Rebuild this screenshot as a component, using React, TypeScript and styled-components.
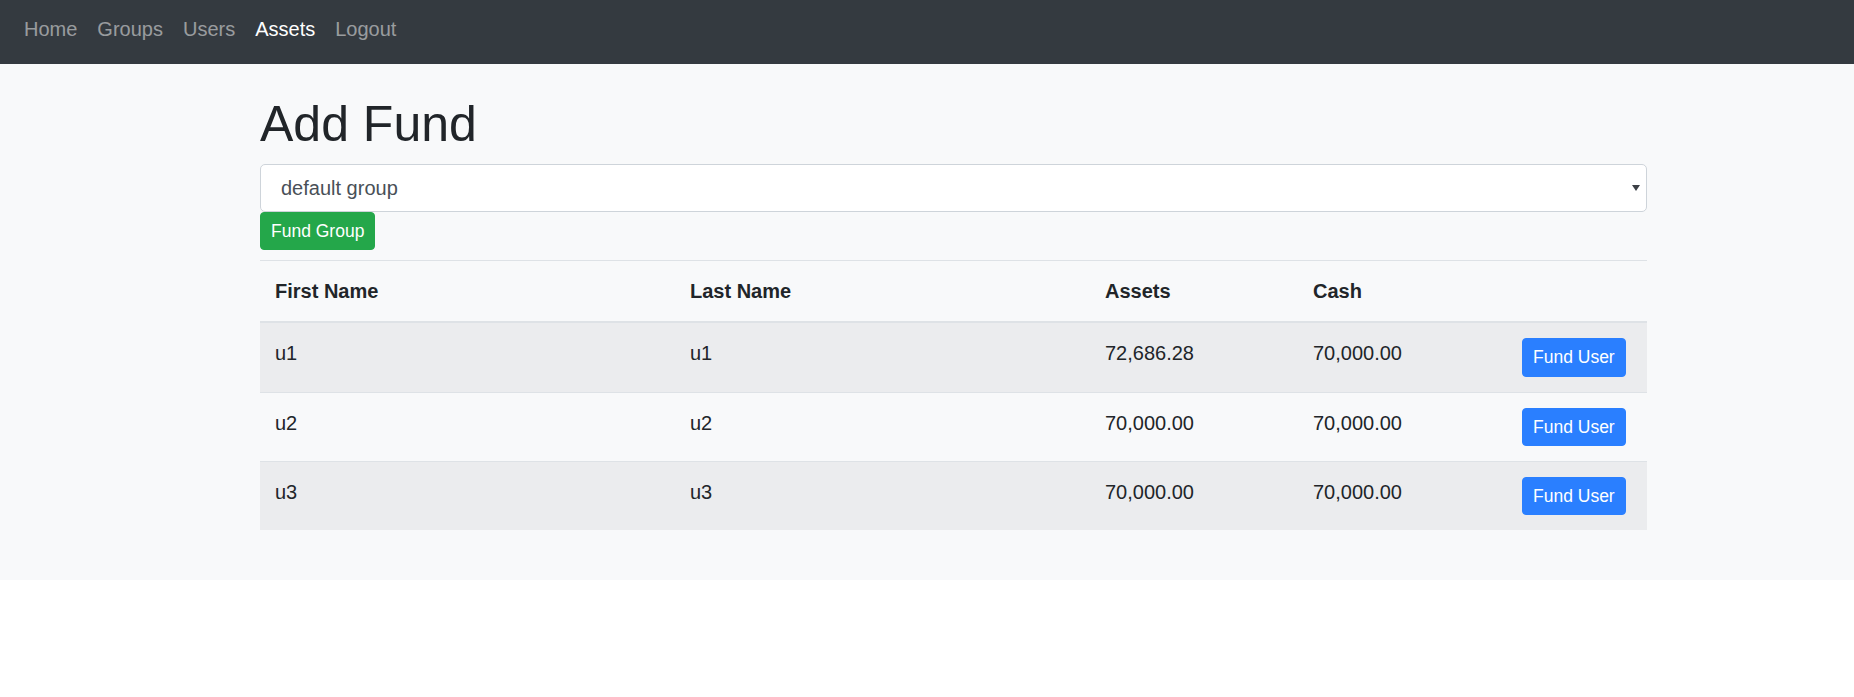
import React from 'react';
import styled, {createGlobalStyle} from "styled-components";

type UserRowType = {
    id: number
    firstName: string
    lastName: string
    assets: string
    cash: string
}

const users: UserRowType[] = [
    {id: 1, firstName: 'u1', lastName: 'u1', assets: '72,686.28', cash: '70,000.00'},
    {id: 2, firstName: 'u2', lastName: 'u2', assets: '70,000.00', cash: '70,000.00'},
    {id: 3, firstName: 'u3', lastName: 'u3', assets: '70,000.00', cash: '70,000.00'},
]

const navItems = ['Home', 'Groups', 'Users', 'Assets', 'Logout']

const App = () => {
    return (
        <>
            <GlobalStyle/>
            <NavBar>
                {navItems.map(item => (
                    <NavLink key={item} href="#" active={item === 'Assets'}>{item}</NavLink>
                ))}
            </NavBar>
            <Main>
                <Container>
                    <Title>Add Fund</Title>
                    <SelectWrap>
                        <Select defaultValue="default">
                            <option value="default">default group</option>
                        </Select>
                        <Arrow/>
                    </SelectWrap>
                    <Button variant="success">Fund Group</Button>
                    <Table>
                        <colgroup>
                            <col style={{width: 415}}/>
                            <col style={{width: 415}}/>
                            <col style={{width: 208}}/>
                            <col style={{width: 209}}/>
                            <col/>
                        </colgroup>
                        <thead>
                        <tr>
                            <Th>First Name</Th>
                            <Th>Last Name</Th>
                            <Th>Assets</Th>
                            <Th>Cash</Th>
                            <Th/>
                        </tr>
                        </thead>
                        <tbody>
                        {users.map((u, i) => (
                            <Row key={u.id} striped={i % 2 === 0}>
                                <Td>{u.firstName}</Td>
                                <Td>{u.lastName}</Td>
                                <Td>{u.assets}</Td>
                                <Td>{u.cash}</Td>
                                <Td><Button variant="primary">Fund User</Button></Td>
                            </Row>
                        ))}
                        </tbody>
                    </Table>
                </Container>
            </Main>
        </>
    );
};

export default App;

const GlobalStyle = createGlobalStyle`
  html {
    font-size: 20px;
  }
  body {
    margin: 0;
    background: #fff;
    color: #212529;
    font-family: "Liberation Sans", Arial, sans-serif;
    line-height: 1.5;
  }
`

const NavBar = styled.nav`
  display: flex;
  align-items: flex-start;
  height: 64px;
  box-sizing: border-box;
  padding: 14px 14px 0;
  background-color: #343a40;
`

const NavLink = styled.a<{ active?: boolean }>`
  padding: 0 10px;
  font-size: 20px;
  line-height: 30px;
  text-decoration: none;
  color: ${props => props.active ? '#fff' : 'rgba(255, 255, 255, 0.5)'};
`

const Main = styled.main`
  background-color: #f8f9fa;
  padding: 30px 0;
`

const Container = styled.div`
  width: 1387px;
  margin-left: 260px;
`

const Title = styled.h1`
  margin: 0 0 10px;
  font-size: 50px;
  font-weight: 500;
  line-height: 1.2;
  color: #212529;
`

const SelectWrap = styled.div`
  position: relative;
`

const Select = styled.select`
  display: block;
  width: 100%;
  height: 48px;
  box-sizing: border-box;
  padding: 0 30px 0 20px;
  appearance: none;
  font-family: inherit;
  font-size: 20px;
  color: #495057;
  background: #fff;
  border: 1px solid #ced4da;
  border-radius: 5px;
  outline: none;
`

const Arrow = styled.span`
  position: absolute;
  right: 7px;
  top: 21px;
  width: 0;
  height: 0;
  border-left: 4px solid transparent;
  border-right: 4px solid transparent;
  border-top: 6px solid #3c4046;
  pointer-events: none;
`

const Button = styled.button<{ variant: 'primary' | 'success' }>`
  display: inline-block;
  padding: 5px 10px;
  font-family: inherit;
  font-size: 17.5px;
  line-height: 1.5;
  color: #fff;
  background-color: ${props => props.variant === 'primary' ? '#2a7fff' : '#24a74a'};
  border: 1px solid ${props => props.variant === 'primary' ? '#2a7fff' : '#24a74a'};
  border-radius: 4px;
  cursor: pointer;
`

const Table = styled.table`
  width: 100%;
  margin: 10px 0 20px;
  border-collapse: collapse;
  table-layout: fixed;
  color: #212529;
`

const Th = styled.th`
  padding: 15px;
  text-align: left;
  vertical-align: bottom;
  font-size: 20px;
  font-weight: 700;
  line-height: 30px;
  border-top: 1px solid #dee2e6;
  border-bottom: 2px solid #dee2e6;
`

const Row = styled.tr<{ striped: boolean }>`
  background-color: ${props => props.striped ? '#ebecee' : 'transparent'};
`

const Td = styled.td`
  padding: 15px;
  vertical-align: top;
  font-size: 20px;
  line-height: 30px;
  border-top: 1px solid #dee2e6;
`
